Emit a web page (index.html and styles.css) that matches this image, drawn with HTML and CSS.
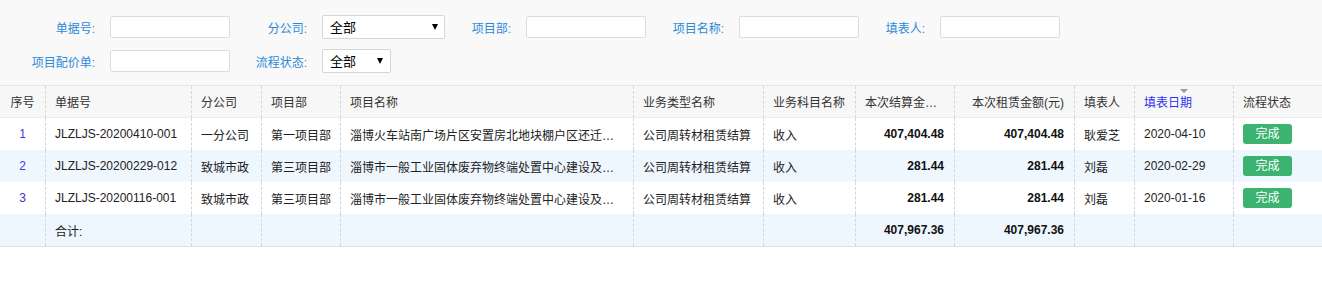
FILE: index.html
```html
<!DOCTYPE html>
<html lang="zh-CN">
<head>
<meta charset="utf-8">
<title>结算单列表</title>
<link rel="stylesheet" href="styles.css">
</head>
<body>
<form class="filter">
  <label class="lbl">单据号:</label>
  <input class="inp" type="text">
  <label class="lbl">分公司:</label>
  <span class="select wide"><select><option>全部</option><option>一分公司</option><option>致城市政</option></select></span>
  <label class="lbl">项目部:</label>
  <input class="inp" type="text">
  <label class="lbl">项目名称:</label>
  <input class="inp" type="text">
  <label class="lbl">填表人:</label>
  <input class="inp" type="text">

  <label class="lbl">项目配价单:</label>
  <input class="inp" type="text">
  <label class="lbl">流程状态:</label>
  <span class="select narrow"><select><option>全部</option><option>完成</option></select></span>
</form>

<table class="grid">
  <colgroup>
    <col style="width:45px">
    <col style="width:146px">
    <col style="width:70px">
    <col style="width:79px">
    <col style="width:293px">
    <col style="width:130px">
    <col style="width:92px">
    <col style="width:99px">
    <col style="width:120px">
    <col style="width:60px">
    <col style="width:99px">
    <col>
  </colgroup>
  <thead>
    <tr>
      <th class="c">序号</th>
      <th>单据号</th>
      <th>分公司</th>
      <th>项目部</th>
      <th>项目名称</th>
      <th>业务类型名称</th>
      <th>业务科目名称</th>
      <th class="r">本次结算金额(元)</th>
      <th class="r">本次租赁金额(元)</th>
      <th>填表人</th>
      <th class="sorted">填表日期</th>
      <th>流程状态</th>
    </tr>
  </thead>
  <tbody>
    <tr>
      <td class="c idx">1</td>
      <td>JLZLJS-20200410-001</td>
      <td>一分公司</td>
      <td>第一项目部</td>
      <td class="name">淄博火车站南广场片区安置房北地块棚户区还迁安置项目</td>
      <td>公司周转材租赁结算</td>
      <td>收入</td>
      <td class="r num">407,404.48</td>
      <td class="r num">407,404.48</td>
      <td>耿爱芝</td>
      <td>2020-04-10</td>
      <td><span class="badge">完成</span></td>
    </tr>
    <tr class="alt">
      <td class="c idx">2</td>
      <td>JLZLJS-20200229-012</td>
      <td>致城市政</td>
      <td>第三项目部</td>
      <td class="name">淄博市一般工业固体废弃物终端处置中心建设及配套工程</td>
      <td>公司周转材租赁结算</td>
      <td>收入</td>
      <td class="r num">281.44</td>
      <td class="r num">281.44</td>
      <td>刘磊</td>
      <td>2020-02-29</td>
      <td><span class="badge">完成</span></td>
    </tr>
    <tr>
      <td class="c idx idx3">3</td>
      <td>JLZLJS-20200116-001</td>
      <td>致城市政</td>
      <td>第三项目部</td>
      <td class="name">淄博市一般工业固体废弃物终端处置中心建设及配套工程</td>
      <td>公司周转材租赁结算</td>
      <td>收入</td>
      <td class="r num">281.44</td>
      <td class="r num">281.44</td>
      <td>刘磊</td>
      <td>2020-01-16</td>
      <td><span class="badge">完成</span></td>
    </tr>
    <tr class="alt total">
      <td></td>
      <td>合计:</td>
      <td></td>
      <td></td>
      <td></td>
      <td></td>
      <td></td>
      <td class="r num">407,967.36</td>
      <td class="r num">407,967.36</td>
      <td></td>
      <td></td>
      <td></td>
    </tr>
  </tbody>
</table>
</body>
</html>
```

FILE: styles.css
```css
* { box-sizing: border-box; }
html, body { margin: 0; padding: 0; background: #fff; }
body {
  font-family: "Liberation Sans", "Noto Sans CJK SC", sans-serif;
  font-size: 12px;
  color: #333;
}

.filter {
  background: #f9f9f9;
  height: 85px;
  padding: 15px 0 0 0;
  margin: 0;
  display: grid;
  grid-template-columns: 110px 120px 92px 123px 81px 120px 93px 120px 81px 120px;
  grid-template-rows: 24px 24px;
  row-gap: 10px;
  align-items: center;
}
.lbl {
  text-align: right;
  padding-right: 15px;
  color: #2a8ad8;
  font-size: 12px;
  white-space: nowrap;
}
.inp {
  width: 120px;
  height: 22px;
  border: 1px solid #dcdcdc;
  border-radius: 2px;
  background: #fff;
  margin: 0;
  padding: 0 4px;
  font: inherit;
}
.select {
  position: relative;
  display: block;
  height: 24px;
}
.select.wide { width: 123px; }
.select.narrow { width: 69px; }
.select select {
  appearance: none;
  -webkit-appearance: none;
  width: 100%;
  height: 24px;
  margin: 0;
  border: 1px solid #d6d6d6;
  border-radius: 2px;
  background: #fff;
  color: #000;
  font-family: "Liberation Sans", "Noto Sans CJK SC", sans-serif;
  font-size: 13px;
  padding: 0 0 0 7px;
}
.select::after {
  content: "";
  position: absolute;
  top: 9px;
  right: 7px;
  width: 0;
  height: 0;
  border-left: 3.5px solid transparent;
  border-right: 3.5px solid transparent;
  border-top: 6px solid #000;
  pointer-events: none;
}
.select.narrow::after { right: 8px; }

.grid {
  width: 100%;
  table-layout: fixed;
  border-collapse: separate;
  border-spacing: 0;
  border-top: 1px solid #e6e6e6;
  border-bottom: 1px solid #e2e2e2;
}
.grid th, .grid td {
  height: 32px;
  padding: 0 4px 0 9px;
  white-space: nowrap;
  overflow: hidden;
  text-overflow: ellipsis;
  text-align: left;
  vertical-align: middle;
  font-weight: normal;
  border-left: 1px dashed #d6d6d6;
}
.grid th:first-child, .grid td:first-child { border-left: none; }
.grid thead th {
  background: #f7f7f7;
  color: #333;
  border-bottom: 1px solid #ececec;
  height: 32px;
}
.grid .c { text-align: center; padding: 0; }
.grid .r { text-align: right; padding-right: 10px; }
.grid .name { padding-right: 18px; }
.grid .num { font-weight: bold; color: #111; }
.grid td { color: #222; }
.grid .idx { color: #3a3ae6; }
.grid .idx3 { color: #4a2fc8; }
.grid tr.alt td { background: #eef6fe; }
.grid th.sorted {
  position: relative;
  color: #2f2ff0;
}
.grid th.sorted::before {
  content: "";
  position: absolute;
  top: 3px;
  left: 50%;
  margin-left: -4px;
  width: 0;
  height: 0;
  border-left: 4px solid transparent;
  border-right: 4px solid transparent;
  border-top: 4px solid #999;
}
.badge {
  display: inline-block;
  width: 49px;
  height: 20px;
  line-height: 20px;
  text-align: center;
  background: #3cb371;
  color: #fff;
  border-radius: 3px;
  font-size: 12px;
}
```
